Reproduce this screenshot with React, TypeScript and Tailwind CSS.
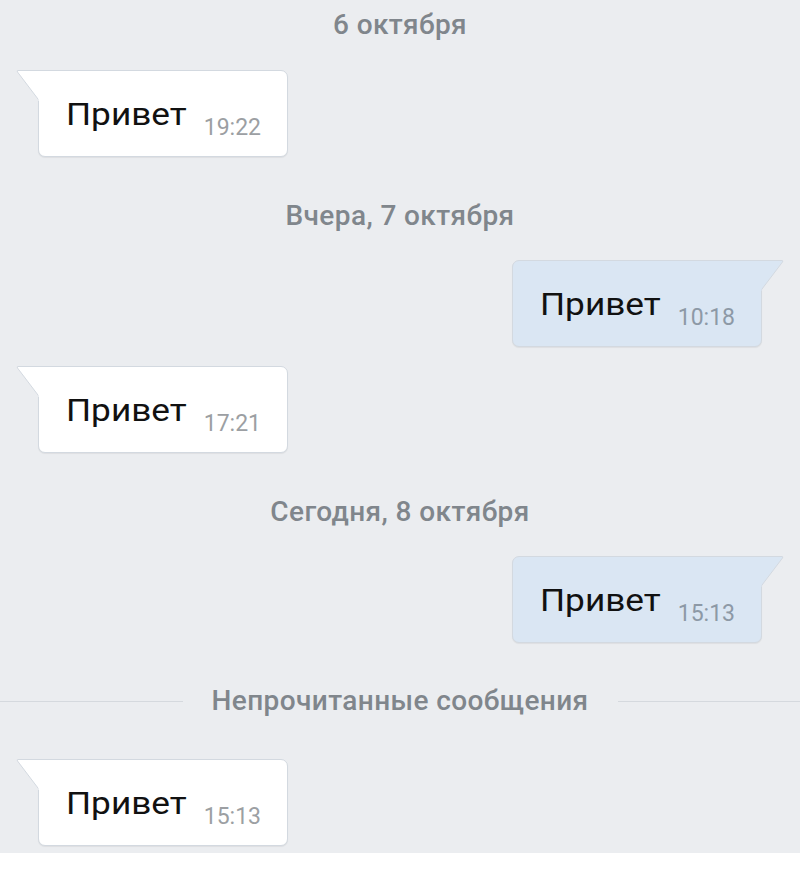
import React from 'react';

type Msg = { kind: 'in' | 'out'; time: string };

function Bubble({ kind, time }: Msg) {
  const out = kind === 'out';
  return (
    <div className={`flex ${out ? 'justify-end pr-[38px]' : 'justify-start pl-[38px]'}`}>
      <div
        className={`relative w-[250px] h-[87px] border border-[#d3d9e0] shadow-[0_1px_1px_rgba(0,0,0,0.06)] ${
          out ? 'bg-[#dae6f3] rounded-[7px] rounded-tr-none' : 'bg-white rounded-[7px] rounded-tl-none'
        }`}
      >
        {/* tail */}
        <svg
          width="24"
          height="32"
          viewBox="0 0 24 32"
          className={`absolute top-[-1px] ${out ? 'right-[-23px]' : 'left-[-23px] -scale-x-100'}`}
        >
          <path d="M0 0.5 L22 0.5 Q23.5 0.5 22.5 2 L0.5 31" fill={out ? '#dae6f3' : '#ffffff'} stroke="#d3d9e0" strokeWidth="1" />
          <rect x="0" y="1" width="1.5" height="30" fill={out ? '#dae6f3' : '#ffffff'} />
        </svg>
        <div className="flex items-start pl-[27px] pt-[27px]">
          <span className="inline-block origin-left scale-x-[1.1] text-[32px] leading-none text-[#111]">Привет</span>
          <span className={`ml-[28px] mt-[18px] text-[23px] leading-none ${out ? 'text-[#8d99a6]' : 'text-[#9c9fa3]'}`}>
            {time}
          </span>
        </div>
      </div>
    </div>
  );
}

function DateLabel({ text }: { text: string }) {
  return (
    <div className="flex justify-center">
      <span className="text-[28px] leading-none font-medium text-[#80868c] tracking-[0.4px]">{text}</span>
    </div>
  );
}

export default function App() {
  return (
    <div className="w-[800px] min-h-[878px] bg-white" style={{ fontFamily: 'Roboto, "Noto Sans", sans-serif' }}>
      <div className="bg-[#ebedf0] h-[853px] pt-[11px]">
        <DateLabel text="6 октября" />
        <div className="mt-[31px]">
          <Bubble kind="in" time="19:22" />
        </div>
        <div className="mt-[45px]">
          <DateLabel text="Вчера, 7 октября" />
        </div>
        <div className="mt-[30px]">
          <Bubble kind="out" time="10:18" />
        </div>
        <div className="mt-[19px]">
          <Bubble kind="in" time="17:21" />
        </div>
        <div className="mt-[45px]">
          <DateLabel text="Сегодня, 8 октября" />
        </div>
        <div className="mt-[30px]">
          <Bubble kind="out" time="15:13" />
        </div>
        <div className="mt-[44px] flex items-center">
          <div className="flex-1 h-px bg-[#d5d9de]" />
          <span className="px-[29px] text-[28px] leading-none font-medium text-[#80868c] tracking-[0.4px]">
            Непрочитанные сообщения
          </span>
          <div className="flex-1 h-px bg-[#d5d9de]" />
        </div>
        <div className="mt-[44px]">
          <Bubble kind="in" time="15:13" />
        </div>
      </div>
    </div>
  );
}
